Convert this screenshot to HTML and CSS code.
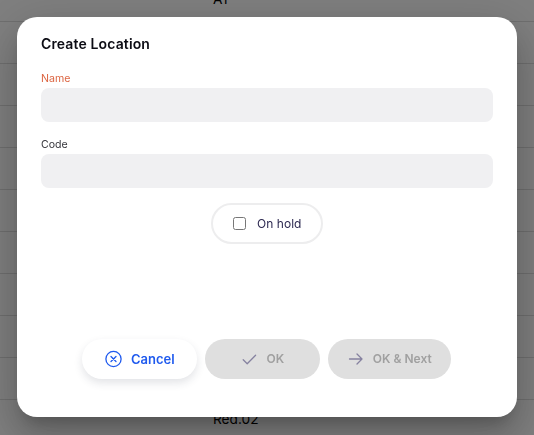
FILE: index.html
```html
<!DOCTYPE html>
<html lang="en">
<head>
<meta charset="utf-8">
<title>Create Location</title>
<link rel="stylesheet" href="styles.css">
</head>
<body>
<div class="list">
  <div class="row">A1</div>
  <div class="row"></div>
  <div class="row"></div>
  <div class="row"></div>
  <div class="row"></div>
  <div class="row"></div>
  <div class="row"></div>
  <div class="row"></div>
  <div class="row"></div>
  <div class="row"></div>
  <div class="row">Red.02</div>
</div>
<div class="backdrop">
  <form class="modal">
    <h1 class="title">Create Location</h1>
    <label class="field required"><span class="label">Name</span><input class="input" type="text"></label>
    <label class="field"><span class="label">Code</span><input class="input" type="text"></label>
    <label class="toggle"><span class="box"></span><span>On hold</span></label>
    <div class="actions">
      <button type="button" class="btn cancel">
        <svg width="18" height="18" viewBox="0 0 18 18"><circle cx="8.5" cy="9" r="7.6"/><path d="M6 6.5l5 5M11 6.5l-5 5"/></svg>
        <span>Cancel</span>
      </button>
      <button type="button" class="btn disabled ok">
        <svg width="16" height="16" viewBox="0 0 16 16"><path d="M2.2 8.7L6.2 12.7 14.6 4.3"/></svg>
        <span>OK</span>
      </button>
      <button type="button" class="btn disabled next">
        <svg width="16" height="16" viewBox="0 0 16 16"><path d="M1.5 8H14M9 3l5 5-5 5"/></svg>
        <span>OK &amp; Next</span>
      </button>
    </div>
  </form>
</div>
</body>
</html>
```
FILE: styles.css
```css
* {
  box-sizing: border-box;
}

body {
  margin: 0;
  height: 435px;
  overflow: hidden;
  font-family: Inter, "Liberation Sans", sans-serif;
  background: #fff;
}

.list {
  margin-top: -20px;
  height: 455px;
  overflow: hidden;
}

.row {
  height: 42px;
  padding-left: 213px;
  border-bottom: 1px solid #dedede;
  font-size: 13.7px;
  line-height: 39px;
  color: #000;
}

.backdrop {
  position: fixed;
  inset: 0;
  padding: 17px;
  background: rgba(0, 0, 0, 0.5);
}

.modal {
  display: flex;
  flex-direction: column;
  width: 500px;
  height: 400px;
  padding: 18px 24px 38px;
  border-radius: 20px;
  background: #fff;
  box-shadow: 0 11px 15px -7px rgba(0, 0, 0, 0.2), 0 24px 38px 3px rgba(0, 0, 0, 0.14), 0 9px 46px 8px rgba(0, 0, 0, 0.12);
}

.title {
  margin: 0 0 17px;
  font-size: 14px;
  font-weight: 600;
  line-height: 18px;
  letter-spacing: 0.13px;
  color: #0c0c14;
}

.field {
  display: flex;
  flex-direction: column;
  height: 66px;
}

.label {
  height: 17.5px;
  font-size: 10.6px;
  line-height: 17.5px;
  color: #35353b;
}

.required .label {
  color: #dc6542;
}

.input {
  width: 100%;
  height: 34px;
  padding: 0 12px;
  border: 0;
  border-radius: 8px;
  background: #f0f0f2;
}

.toggle {
  display: flex;
  align-items: center;
  align-self: center;
  width: 112px;
  height: 41px;
  margin-top: 1px;
  padding-left: 20px;
  gap: 11px;
  border: 2px solid #ededee;
  border-radius: 21px;
  font-size: 12px;
  letter-spacing: 0.04px;
  color: #2c2850;
}

.box {
  width: 13px;
  height: 13px;
  border: 1px solid #777;
  border-radius: 2.5px;
}

.actions {
  display: flex;
  justify-content: center;
  gap: 8px;
  margin: auto 0.5px 0 0;
}

.btn {
  display: flex;
  align-items: center;
  justify-content: center;
  gap: 8px;
  width: 115px;
  height: 40px;
  padding: 0;
  border: 0;
  border-radius: 20px;
  background: #fff;
  font: 600 13px/18px Inter, "Liberation Sans", sans-serif;
}

.btn svg {
  fill: none;
  stroke: currentColor;
  stroke-width: 1.3;
  stroke-linecap: round;
  stroke-linejoin: round;
}

.cancel {
  color: #1f5aee;
  box-shadow: 0 4px 9px rgba(40, 50, 70, 0.13);
}

.disabled {
  gap: 9px;
  background: #dfdfdf;
  color: #a0a0a0;
  font-size: 12px;
}

.disabled svg {
  stroke: #8682a0;
}

.next {
  width: 123px;
}
```
